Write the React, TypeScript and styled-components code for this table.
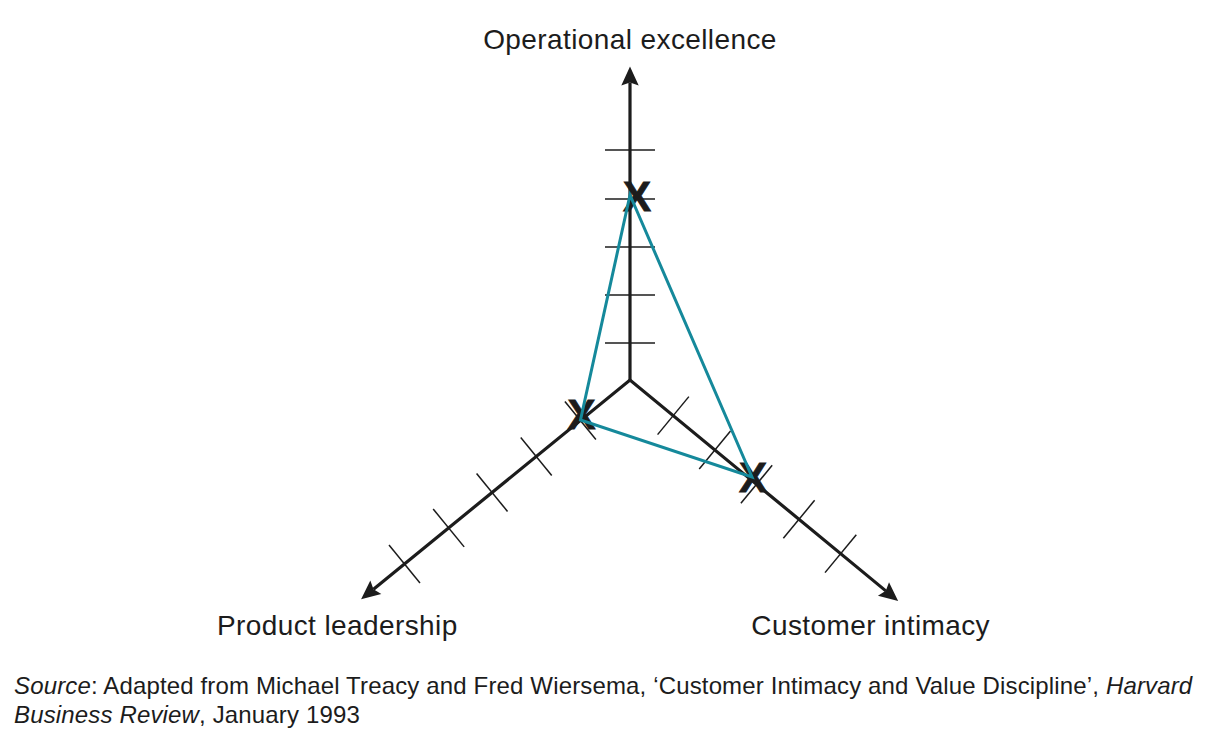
import React from 'react'
import styled, { createGlobalStyle } from 'styled-components'

const GlobalStyle = createGlobalStyle`
  html, body {
    margin: 0;
    padding: 0;
    background: #ffffff;
  }
  body {
    font-family: 'Liberation Sans', Arial, sans-serif;
    color: #1c1c1c;
  }
`

const INK = '#1c1c1c'
const TEAL = '#15899b'
const CENTER = { x: 630, y: 380 }

type Axis = {
  angle: number
  length: number
  ticks: number[]
  tickHalf: number
}

// angles in degrees, y pointing down (page coords)
const axes: Axis[] = [
  { angle: -90, length: 313.5, ticks: [37, 85, 133, 181, 230], tickHalf: 25 },
  { angle: 140.8, length: 347, ticks: [64, 121, 178, 234, 291], tickHalf: 24.5 },
  { angle: 39.5, length: 347.5, ticks: [56, 110, 164, 219, 273], tickHalf: 24.6 },
]

const markers = [
  { x: 637, y: 196 },
  { x: 581.5, y: 414 },
  { x: 753, y: 477 },
]

const triangle = '630,195 580.5,420 752,477'

const along = (angle: number, d: number, off = 0) => {
  const r = (angle * Math.PI) / 180
  const ux = Math.cos(r)
  const uy = Math.sin(r)
  // perpendicular
  const nx = -uy
  const ny = ux
  return {
    x: CENTER.x + ux * d + nx * off,
    y: CENTER.y + uy * d + ny * off,
  }
}

const Page = styled.div`
  width: 1224px;
  min-height: 756px;
  display: flex;
  flex-direction: column;
`

const ChartBlock = styled.div`
  width: 832px;
  margin-left: 214px;
  display: flex;
  flex-direction: column;
`

const Title = styled.div`
  padding-top: 24px;
  font-size: 28px;
  line-height: 32px;
  letter-spacing: 0.4px;
  text-align: center;
`

const Diagram = styled.svg`
  display: block;
  width: 832px;
  height: 554px;
`

const Marker = styled.text`
  font-family: 'Liberation Sans', Arial, sans-serif;
  font-weight: bold;
  font-size: 42px;
  fill: ${INK};
  stroke: ${INK};
  stroke-width: 0.9px;
`

const LabelRow = styled.div`
  display: flex;
  justify-content: space-between;
  padding: 0 56px 0 3px;
`

const AxisLabel = styled.span`
  font-size: 28px;
  line-height: 32px;
  letter-spacing: 0.4px;
`

const Caption = styled.p`
  margin: 29px 14px 0;
  font-size: 24px;
  line-height: 29px;
  letter-spacing: 0.15px;
`

const Em = styled.i`
  font-style: italic;
`

const Arrow = ({ axis }: { axis: Axis }) => {
  const { angle, length } = axis
  const tip = along(angle, length)
  const a = along(angle, length - 19, 8.7)
  const b = along(angle, length - 19, -8.7)
  const notch = along(angle, length - 16)
  return (
    <polygon
      points={`${tip.x},${tip.y} ${a.x},${a.y} ${notch.x},${notch.y} ${b.x},${b.y}`}
      fill={INK}
    />
  )
}

const Ticks = ({ axis }: { axis: Axis }) => (
  <>
    {axis.ticks.map((d) => {
      const p = along(axis.angle, d, axis.tickHalf)
      const q = along(axis.angle, d, -axis.tickHalf)
      return <line key={d} x1={p.x} y1={p.y} x2={q.x} y2={q.y} stroke={INK} strokeWidth={1.5} />
    })}
  </>
)

const TriadChart = () => {
  const [up, left, right] = axes
  const upEnd = along(up.angle, up.length - 16)
  const leftEnd = along(left.angle, left.length - 16)
  const rightEnd = along(right.angle, right.length - 16)
  return (
    <Diagram viewBox="214 56 832 554">
      {axes.map((ax) => (
        <Ticks key={ax.angle} axis={ax} />
      ))}
      <path
        d={`M${leftEnd.x},${leftEnd.y} L${CENTER.x},${CENTER.y} L${rightEnd.x},${rightEnd.y}`}
        fill="none"
        stroke={INK}
        strokeWidth={3.2}
        strokeLinejoin="miter"
      />
      <line x1={CENTER.x} y1={CENTER.y} x2={upEnd.x} y2={upEnd.y} stroke={INK} strokeWidth={3.2} />
      {axes.map((ax) => (
        <Arrow key={ax.angle} axis={ax} />
      ))}
      {markers.map((m, i) => (
        <Marker key={i} x={m.x} y={m.y + 15} textAnchor="middle">
          X
        </Marker>
      ))}
      <polygon points={triangle} fill="none" stroke={TEAL} strokeWidth={3} strokeLinejoin="miter" />
    </Diagram>
  )
}

export default function App() {
  return (
    <Page>
      <GlobalStyle />
      <ChartBlock>
        <Title>Operational excellence</Title>
        <TriadChart />
        <LabelRow>
          <AxisLabel>Product leadership</AxisLabel>
          <AxisLabel>Customer intimacy</AxisLabel>
        </LabelRow>
      </ChartBlock>
      <Caption>
        <Em>Source</Em>: Adapted from Michael Treacy and Fred Wiersema, ‘Customer Intimacy and Value
        Discipline’, <Em>Harvard Business Review</Em>, January 1993
      </Caption>
    </Page>
  )
}
